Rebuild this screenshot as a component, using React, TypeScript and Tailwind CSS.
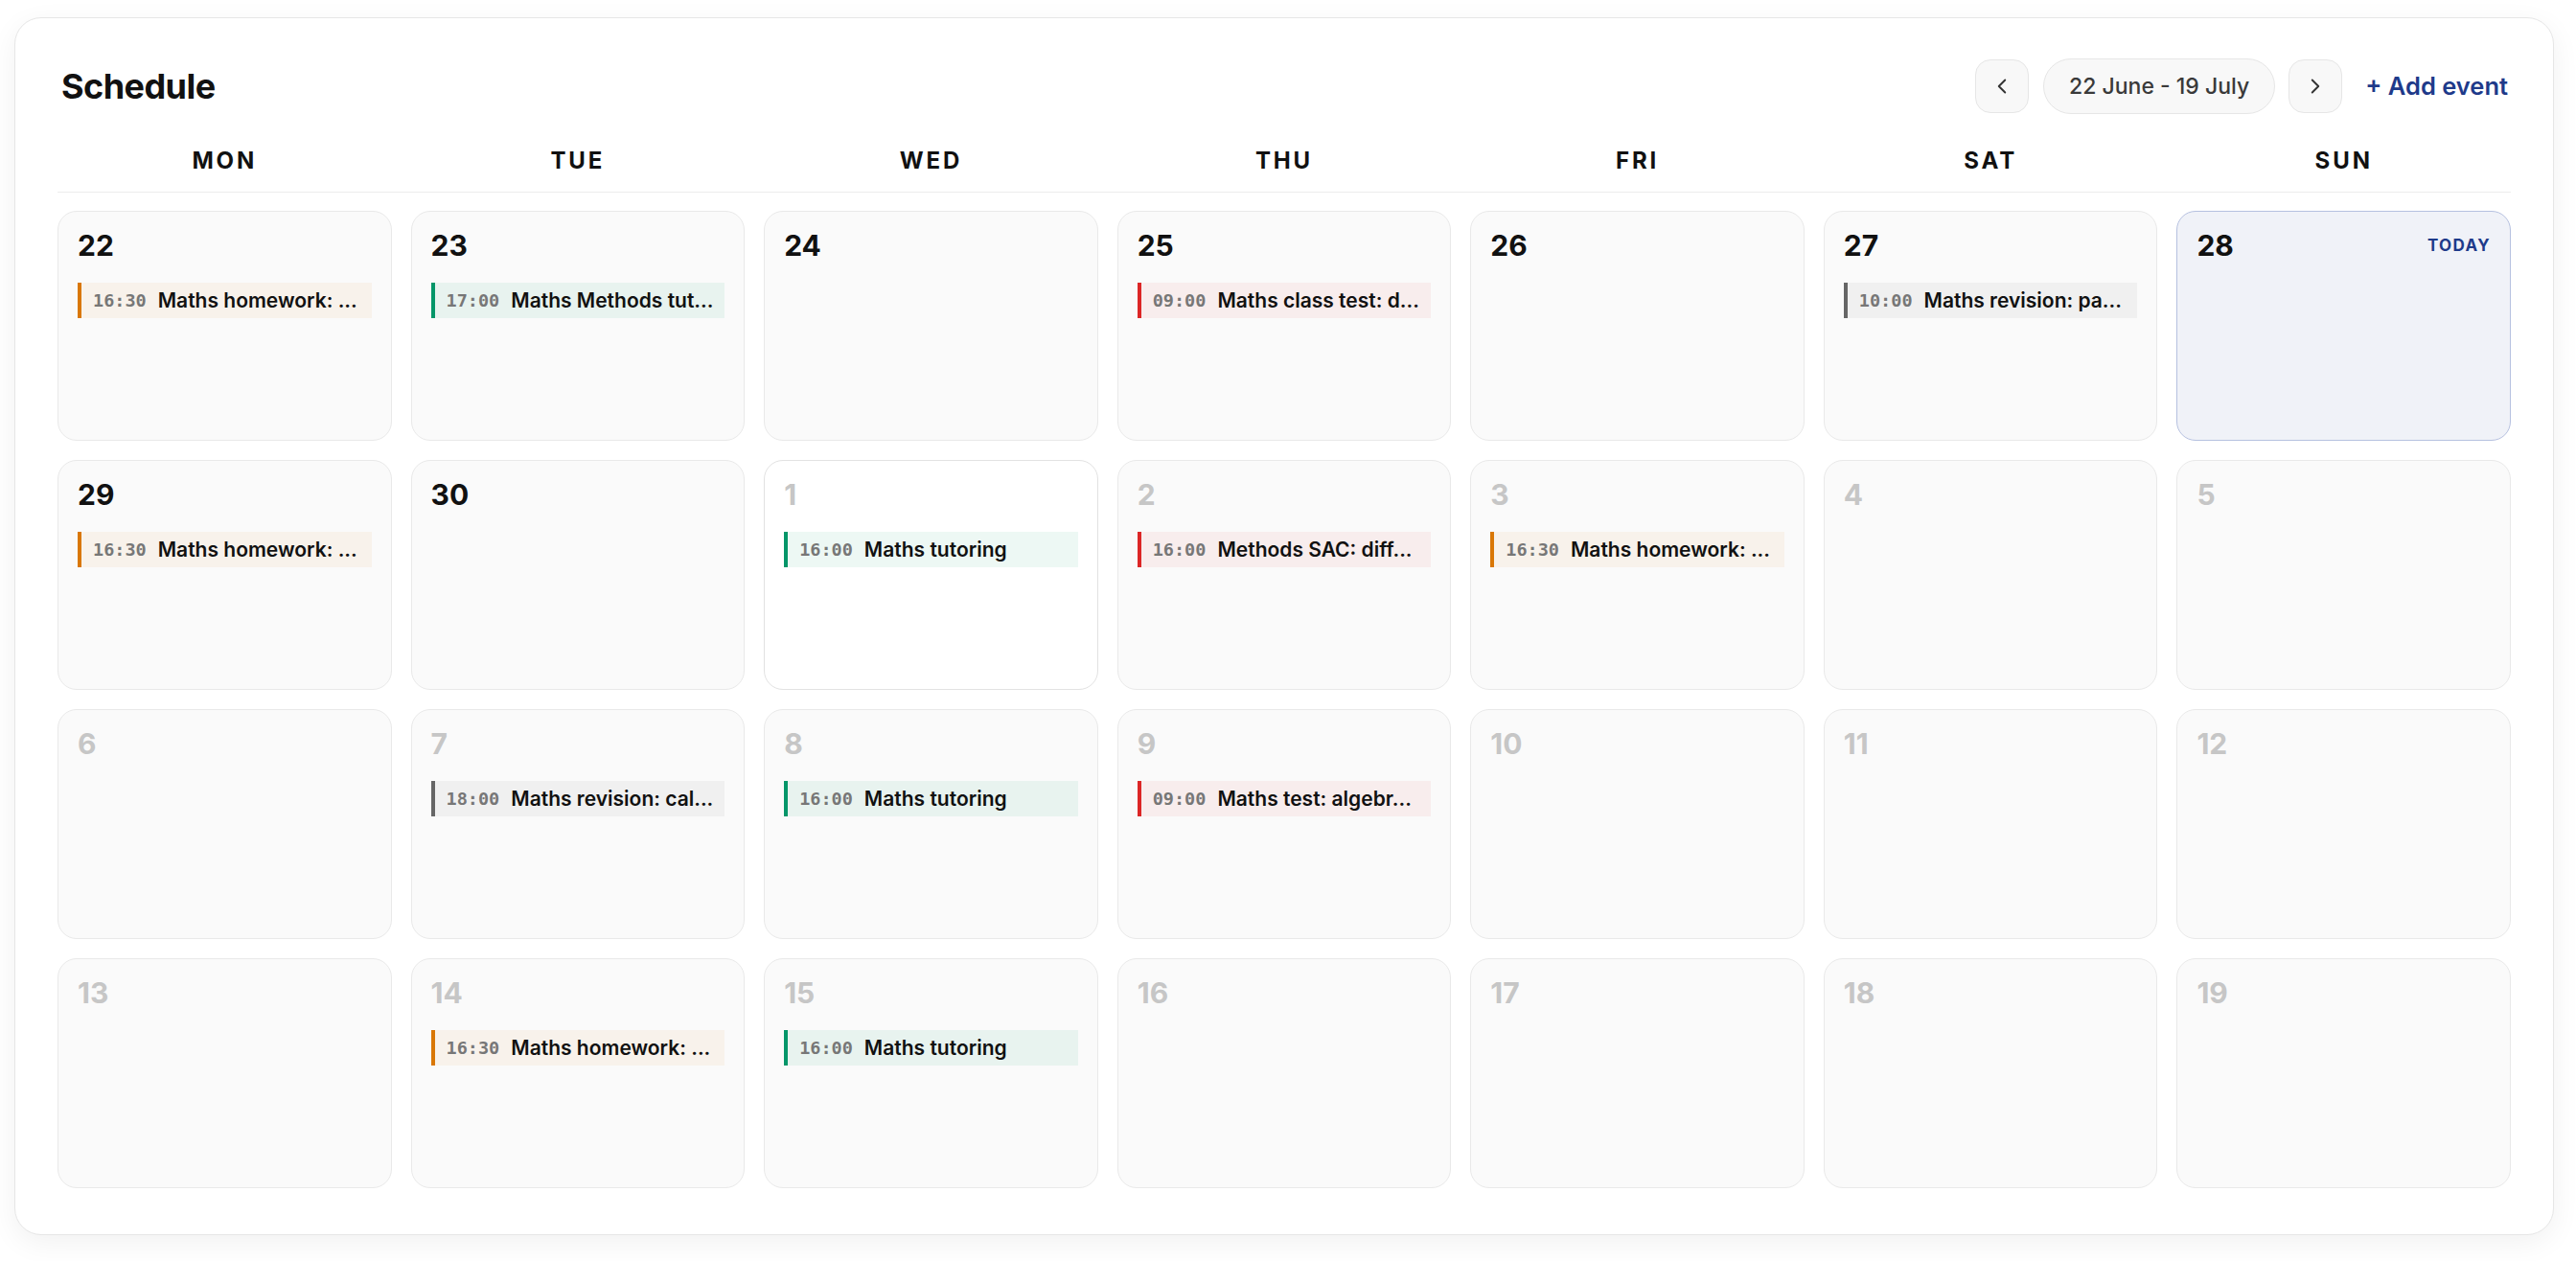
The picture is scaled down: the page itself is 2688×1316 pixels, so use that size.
import { ChevronLeft, ChevronRight } from "lucide-react"

type Tone = "orange" | "green" | "red" | "gray"

interface CalEvent { time: string; title: string; tone: Tone }
interface Day { n: number; muted?: boolean; today?: boolean; hover?: boolean; event?: CalEvent }

const toneClass: Record<Tone, string> = {
  orange: "border-[#d97706] bg-[rgba(217,119,6,0.06)]",
  green: "border-[#059669] bg-[rgba(5,150,105,0.07)]",
  red: "border-[#dc2626] bg-[rgba(220,38,38,0.06)]",
  gray: "border-[#666666] bg-[rgba(0,0,0,0.04)]",
}

const hw: CalEvent = { time: "16:30", title: "Maths homework: ...", tone: "orange" }
const tutoring: CalEvent = { time: "16:00", title: "Maths tutoring", tone: "green" }

const days: Day[] = [
  { n: 22, event: hw },
  { n: 23, event: { time: "17:00", title: "Maths Methods tut...", tone: "green" } },
  { n: 24 },
  { n: 25, event: { time: "09:00", title: "Maths class test: d...", tone: "red" } },
  { n: 26 },
  { n: 27, event: { time: "10:00", title: "Maths revision: pa...", tone: "gray" } },
  { n: 28, today: true },
  { n: 29, event: hw },
  { n: 30 },
  { n: 1, muted: true, hover: true, event: tutoring },
  { n: 2, muted: true, event: { time: "16:00", title: "Methods SAC: diff...", tone: "red" } },
  { n: 3, muted: true, event: hw },
  { n: 4, muted: true },
  { n: 5, muted: true },
  { n: 6, muted: true },
  { n: 7, muted: true, event: { time: "18:00", title: "Maths revision: cal...", tone: "gray" } },
  { n: 8, muted: true, event: tutoring },
  { n: 9, muted: true, event: { time: "09:00", title: "Maths test: algebr...", tone: "red" } },
  { n: 10, muted: true },
  { n: 11, muted: true },
  { n: 12, muted: true },
  { n: 13, muted: true },
  { n: 14, muted: true, event: hw },
  { n: 15, muted: true, event: tutoring },
  { n: 16, muted: true },
  { n: 17, muted: true },
  { n: 18, muted: true },
  { n: 19, muted: true },
]

const weekdays = ["MON", "TUE", "WED", "THU", "FRI", "SAT", "SUN"]

function EventChip({ event }: { event: CalEvent }) {
  return (
    <div className={`mt-[21px] flex h-[37px] items-center gap-3 border-l-4 pl-3 pr-2 ${toneClass[event.tone]}`}>
      <span className="shrink-0 font-['DejaVu_Sans_Mono',monospace] text-[18.5px] font-semibold text-[#777777]">
        {event.time}
      </span>
      <span className="truncate text-[21px] font-semibold text-[#111111]">{event.title}</span>
    </div>
  )
}

function DayCell({ day }: { day: Day }) {
  let box = "border-[#e9e9e9] bg-[#fafafa]"
  if (day.today) box = "border-[#b6c1e0] bg-[#f0f2f8]"
  else if (day.hover) box = "border-[#e2e2e2] bg-white"

  return (
    <div className={`h-[240px] rounded-[20px] border px-5 pt-[17px] ${box}`}>
      <div className="flex items-start justify-between">
        <span className={`text-[30px] font-bold leading-[36px] ${day.muted ? "text-[#c6c6c6]" : "text-[#111111]"}`}>
          {day.n}
        </span>
        {day.today && (
          <span className="mt-[6px] text-[17px] font-bold tracking-[0.08em] text-[#1e3a8a]">TODAY</span>
        )}
      </div>
      {day.event && <EventChip event={day.event} />}
    </div>
  )
}

export default function App() {
  return (
    <div className="min-h-screen bg-white pt-[18px] font-['Inter',sans-serif]">
      <div className="ml-[15px] w-[2650px] rounded-[28px] border border-[#e6e6e6] bg-white px-[44px] pb-12 pt-[43px] shadow-[0_8px_30px_rgba(0,0,0,0.06)]">
        <div className="flex h-[56px] items-center justify-between">
          <h1 className="pl-1 text-[36px] font-bold leading-[40px] tracking-[-0.015em] text-[#111111]">Schedule</h1>
          <div className="flex items-center">
            <button className="flex h-[56px] w-[56px] items-center justify-center rounded-[16px] border border-[#e6e6e6] bg-[#f8f8f8] text-[#333333]">
              <ChevronLeft size={26} strokeWidth={1.75} />
            </button>
            <div className="ml-[15px] flex h-[58px] items-center rounded-full border border-[#e6e6e6] bg-[#f8f8f8] px-[26px] text-[23px] font-medium text-[#3a3a3a]">
              22 June - 19 July
            </div>
            <button className="ml-[14px] flex h-[56px] w-[56px] items-center justify-center rounded-[16px] border border-[#e6e6e6] bg-[#f8f8f8] text-[#333333]">
              <ChevronRight size={26} strokeWidth={1.75} />
            </button>
            <button className="ml-6 mr-[3px] text-[25.5px] font-semibold text-[#1e3a8a]">+ Add event</button>
          </div>
        </div>

        <div className="mt-[34px] grid grid-cols-7 gap-5 border-b border-[#ececec] pb-4">
          {weekdays.map((d) => (
            <div key={d} className="text-center text-[24px] font-bold leading-[32px] tracking-[0.12em] text-[#111111]">
              {d}
            </div>
          ))}
        </div>

        <div className="mt-[19px] grid grid-cols-7 gap-5">
          {days.map((day, i) => (
            <DayCell key={i} day={day} />
          ))}
        </div>
      </div>
    </div>
  )
}
